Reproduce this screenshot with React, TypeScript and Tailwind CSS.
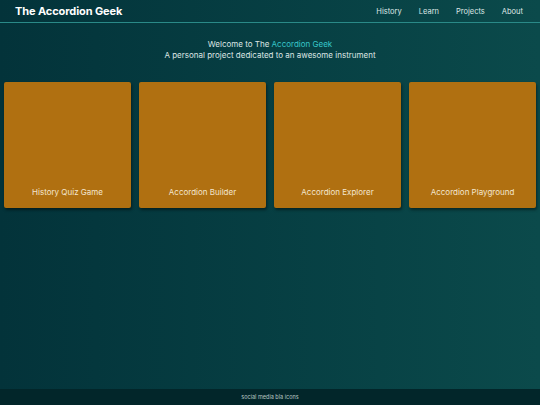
import React from 'react'

const cards = ['History Quiz Game', 'Accordion Builder', 'Accordion Explorer', 'Accordion Playground']
const links = ['History', 'Learn', 'Projects', 'About']

export default function App() {
  return (
    <div
      className="flex flex-col w-[540px] h-[405px] bg-gradient-to-r from-[#03333a] to-[#0b4a4b] text-[#e6ece9]"
      style={{ fontFamily: 'Inter, "DejaVu Sans", sans-serif' }}
    >
      {/* Header */}
      <header className="flex items-center justify-between h-[23px] px-[15px] border-b border-[#2a8a88]">
        <span className="text-[11px] font-bold tracking-[-0.1px] text-white">The Accordion Geek</span>
        <nav className="flex gap-[17px] pr-[2px] pt-[1px] text-[7.5px] text-[#dfe8e6]">
          {links.map((l) => (
            <span key={l}>{l}</span>
          ))}
        </nav>
      </header>

      {/* Intro */}
      <div className="flex flex-col items-center mt-[16px] text-[8px] leading-[11px] text-[#dde6e4]">
        <span>
          Welcome to The <span className="text-[#37c6c8]">Accordion Geek</span>
        </span>
        <span>A personal project dedicated to an awesome instrument</span>
      </div>

      {/* Cards */}
      <div className="grid grid-cols-4 gap-[8px] px-[4px] mt-[21px]">
        {cards.map((c) => (
          <div
            key={c}
            className="flex items-end justify-center h-[126px] pb-[10px] rounded-[2px] bg-[#b07011] shadow-[1px_2px_3px_rgba(0,0,0,0.45)] text-[8px] text-[#f3e6cf]"
          >
            {c}
          </div>
        ))}
      </div>

      <div className="flex-1" />

      {/* Footer */}
      <footer className="flex items-center justify-center h-[16px] bg-[#02262a] text-[5.5px] text-[#b9c6c4]">
        social media bla icons
      </footer>
    </div>
  )
}
